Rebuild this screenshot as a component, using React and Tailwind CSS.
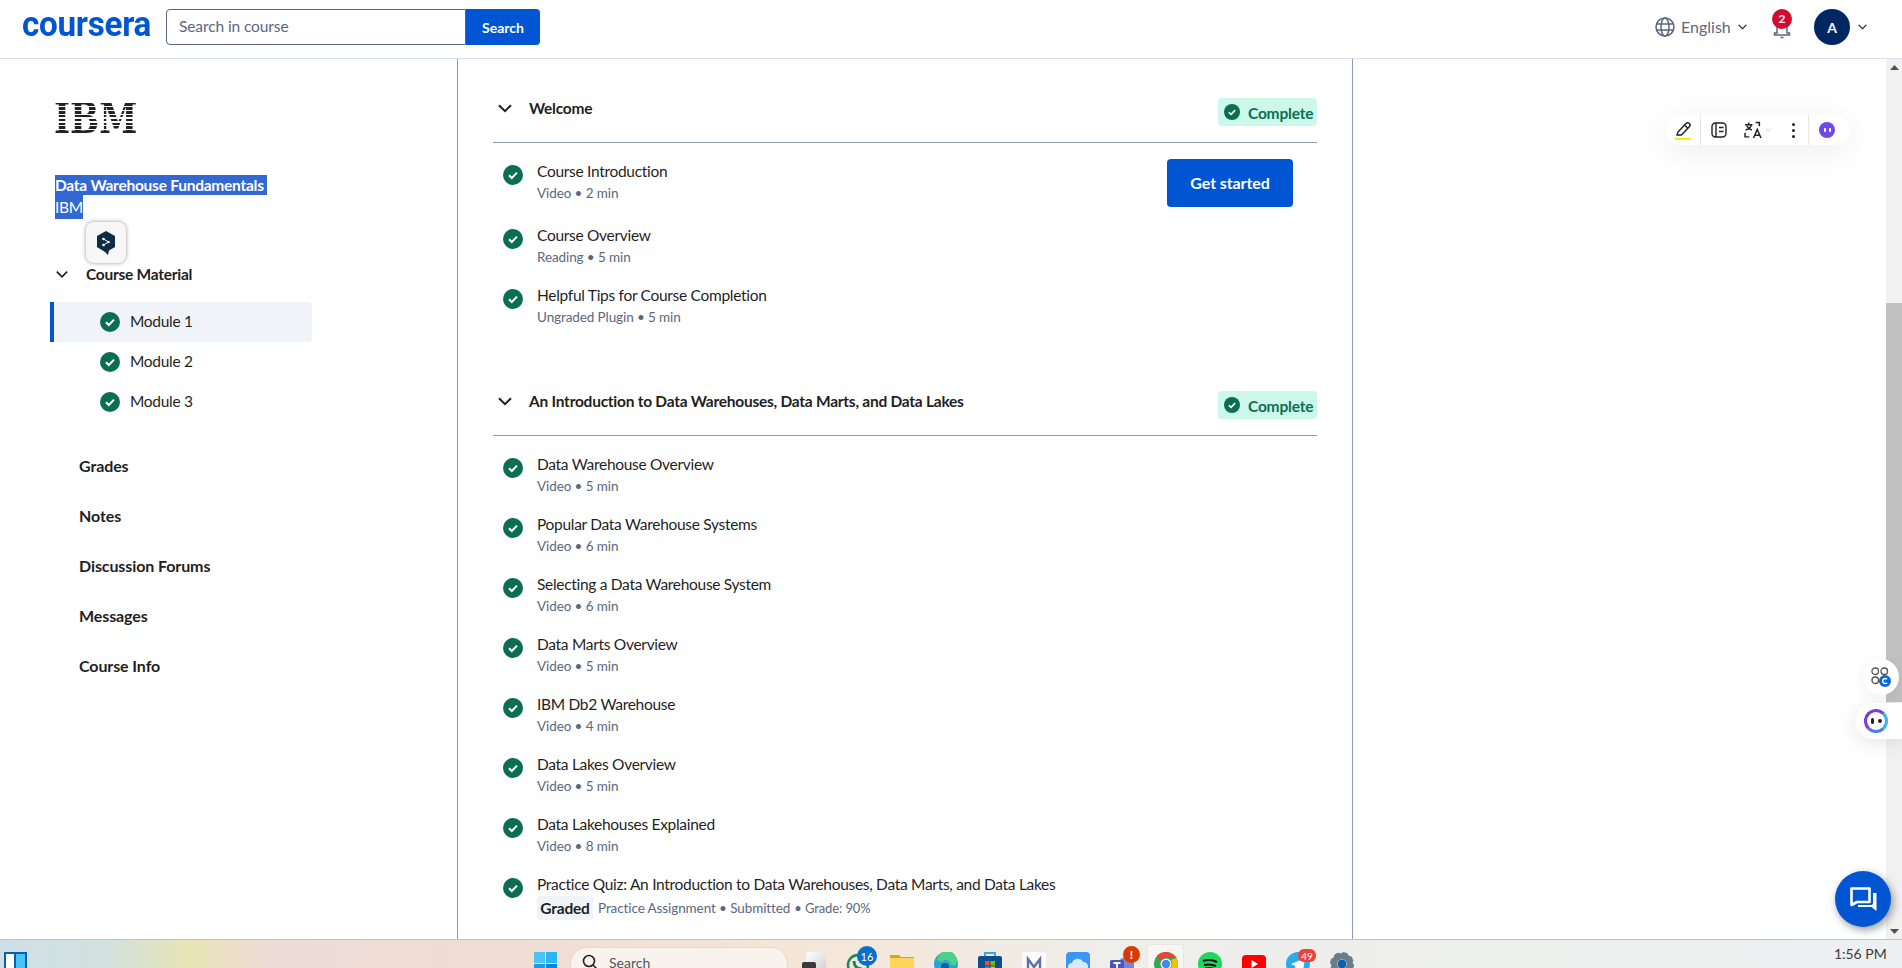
import React from "react";

const Check = ({ size = 20 }) => (
  <svg width={size} height={size} viewBox="0 0 20 20" className="shrink-0">
    <circle cx="10" cy="10" r="10" fill="#0b6e52" />
    <path d="M6 10.3l2.8 2.7L14 7.6" fill="none" stroke="#fff" strokeWidth="2" />
  </svg>
);

const Chevron = ({ className = "", color = "#1f1f1f", w = 2 }) => (
  <svg viewBox="0 0 14 9" className={className}>
    <path d="M1 1.2l6 6 6-6" fill="none" stroke={color} strokeWidth={w} />
  </svg>
);

const Badge = () => (
  <div className="flex h-[28px] w-[99px] shrink-0 items-center gap-[8px] rounded-[4px] bg-[#ccf8e9] pl-[6px] text-[15.5px] font-bold leading-[28px] tracking-[-0.2px] text-[#0b6e52]">
    <Check size={16} />
    <span className="pt-[1px]">Complete</span>
  </div>
);

const Item = ({ title, meta, children, className = "h-[60px]" }) => (
  <div className={"flex gap-[14px] pl-[10px] " + className}>
    <div className="pt-[4px]">
      <Check size={20} />
    </div>
    <div className="flex flex-col">
      <div className="text-[15.5px] leading-[20px] tracking-[-0.3px] text-[#1f1f1f]">{title}</div>
      {children || (
        <div className="mt-[3px] text-[13.5px] leading-[18px] tracking-[-0.1px] text-[#5b6780]">{meta}</div>
      )}
    </div>
  </div>
);

const Section = ({ title, items, extra, className = "" }) => (
  <section className={className}>
    <div className="flex items-start justify-between border-b border-[#8c9ab5] pb-[16px]">
      <div className="flex items-center gap-[17px] pl-[5px] text-[15.5px] font-bold leading-[20px] tracking-[-0.25px] text-[#1f1f1f]">
        <Chevron className="h-[9px] w-[14px]" />
        <span>{title}</span>
      </div>
      <Badge />
    </div>
    <div className="pt-[18px]">{items}</div>
    {extra}
  </section>
);

const Nav = ({ children }) => (
  <div className="flex h-[50px] items-center pl-[79px] text-[16px] font-bold tracking-[-0.1px] text-[#1f1f1f]">{children}</div>
);

const Module = ({ n, active }) => (
  <div
    className={
      active
        ? "flex h-[40px] w-[262px] items-center gap-[10px] rounded-r-[4px] border-l-[4px] border-[#0056d2] bg-[#f0f4f9] pl-[46px] text-[15.5px] tracking-[-0.3px] text-[#1f1f1f]"
        : "flex h-[40px] w-[262px] items-center gap-[10px] pl-[50px] text-[15.5px] tracking-[-0.3px] text-[#1f1f1f]"
    }
  >
    <Check />
    <span>Module {n}</span>
  </div>
);

const TaskIcon = ({ children, className = "" }) => (
  <div className={"relative h-[24px] w-[24px] shrink-0 " + className}>{children}</div>
);

const Arrow = ({ up }) => (
  <div className="flex h-[16px] items-center justify-center">
    <svg width="9" height="5" viewBox="0 0 9 5">
      <path d={up ? "M4.5 0L9 5H0z" : "M4.5 5L9 0H0z"} fill="#505050" />
    </svg>
  </div>
);

export default function App() {
  return (
    <div className="relative flex h-[968px] w-[1902px] flex-col overflow-hidden bg-white font-['Lato','Noto_Sans',sans-serif]">
      {/* Header */}
      <header className="flex h-[59px] shrink-0 items-start border-b border-[#dae1ed] bg-white">
        <div className="ml-[22px] mt-[5px] h-[40px] w-[144px] shrink-0">
          <span className="inline-block origin-left scale-x-[0.95] font-['Roboto',sans-serif] text-[35px] font-bold leading-[40px] tracking-[-0.3px] text-[#0056d2]">
            coursera
          </span>
        </div>
        <div className="mt-[9px] flex h-[36px] w-[374px] shrink-0">
          <div className="flex h-full w-[300px] items-center rounded-l-[4px] border border-[#5b6780] pl-[12px] text-[15.5px] tracking-[-0.1px] text-[#5b6780]">
            Search in course
          </div>
          <div className="flex h-full w-[74px] items-center justify-center rounded-r-[4px] bg-[#0056d2] text-[14px] font-bold text-white">
            Search
          </div>
        </div>
        <div className="flex-1" />
        <div className="mt-[17px] flex h-[20px] w-[101px] items-center">
          <svg width="20" height="20" viewBox="0 0 20 20" fill="none" stroke="#5b6780" strokeWidth="1.5" className="ml-[1px] shrink-0">
            <circle cx="10" cy="10" r="9" />
            <ellipse cx="10" cy="10" rx="4" ry="9" />
            <path d="M1.500 7h17M1.500 13h17" />
          </svg>
          <span className="ml-[6px] w-[56px] text-[16px] text-[#5b6780]">English</span>
          <Chevron className="ml-[1px] h-[6px] w-[9px] shrink-0" color="#1f1f1f" w={1.8} />
        </div>
        <div className="relative ml-[16px] mt-[9px] h-[30px] w-[22px]">
          <svg width="22" height="30" viewBox="0 0 22 30" fill="none" stroke="#5b6780" strokeWidth="1.5">
            <path d="M6 15v9H3.500v2h15v-2H16v-9M9.500 28.500h3" />
          </svg>
          <div className="absolute left-[1px] top-0 flex h-[20px] w-[20px] items-center justify-center rounded-full bg-[#d30a2e] text-[12px] font-bold leading-none text-white">
            2
          </div>
        </div>
        <div className="ml-[21px] mt-[9px] flex h-[36px] w-[36px] items-center justify-center rounded-full bg-[#002761] text-[14px] font-bold text-white">
          A
        </div>
        <Chevron className="ml-[8px] mr-[35px] mt-[24px] h-[6px] w-[9px]" w={1.8} />
      </header>

      {/* Main */}
      <div className="flex min-h-0 flex-1">
        <aside className="w-[458px] shrink-0 border-r border-[#8c9ab5]">
          <div className="ml-[54px] mt-[44px] h-[31px] w-[100px] origin-left scale-x-[0.82] bg-[repeating-linear-gradient(180deg,#222_0px,#222_2.7px,transparent_2.7px,transparent_3.9px)] bg-clip-text font-['DejaVu_Serif',serif] text-[42px] font-bold leading-[31px] text-transparent">
            IBM
          </div>
          <div className="ml-[55px] mt-[41px] flex flex-col items-start">
            <div className="h-[20px] bg-[#3367d1] pr-[3px] text-[15.5px] font-bold leading-[20px] tracking-[-0.25px] text-white">
              Data Warehouse Fundamentals
            </div>
            <div className="h-[24px] bg-[#3367d1] text-[15.5px] leading-[24px] tracking-[-0.3px] text-white">IBM</div>
          </div>
          <div className="ml-[56px] mt-[45px] flex h-[20px] items-center gap-[18px] text-[15.5px] font-bold leading-[20px] tracking-[-0.25px] text-[#1f1f1f]">
            <Chevron className="h-[9px] w-[12px]" />
            <span>Course Material</span>
          </div>
          <div className="ml-[50px] mt-[18px] flex flex-col">
            <Module n={1} active />
            <Module n={2} />
            <Module n={3} />
          </div>
          <div className="mt-[19px] flex flex-col">
            <Nav>Grades</Nav>
            <Nav>Notes</Nav>
            <Nav>Discussion Forums</Nav>
            <Nav>Messages</Nav>
            <Nav>Course Info</Nav>
          </div>
        </aside>

        <main className="w-[895px] shrink-0 border-r border-[#8c9ab5] pl-[35px] pr-[35px] pt-[39px]">
          <div className="relative">
            <Section
              title="Welcome"
              items={
                <>
                  <Item className="h-[64px]" title="Course Introduction" meta="Video • 2 min" />
                  <Item title="Course Overview" meta="Reading • 5 min" />
                  <Item title="Helpful Tips for Course Completion" meta="Ungraded Plugin • 5 min" />
                </>
              }
            />
            <div className="absolute left-[674px] top-[61px] flex h-[48px] w-[126px] items-center justify-center rounded-[4px] bg-[#0056d2] text-[16px] font-bold tracking-[-0.1px] text-white">
              Get started
            </div>
          </div>
          <Section
            className="mt-[46px]"
            title="An Introduction to Data Warehouses, Data Marts, and Data Lakes"
            items={
              <>
                <Item title="Data Warehouse Overview" meta="Video • 5 min" />
                <Item title="Popular Data Warehouse Systems" meta="Video • 6 min" />
                <Item title="Selecting a Data Warehouse System" meta="Video • 6 min" />
                <Item title="Data Marts Overview" meta="Video • 5 min" />
                <Item title="IBM Db2 Warehouse" meta="Video • 4 min" />
                <Item title="Data Lakes Overview" meta="Video • 5 min" />
                <Item title="Data Lakehouses Explained" meta="Video • 8 min" />
                <Item title="Practice Quiz: An Introduction to Data Warehouses, Data Marts, and Data Lakes">
                  <div className="mt-[2px] flex items-center text-[13.5px] leading-[24px] tracking-[-0.1px] text-[#5b6780]">
                    <span className="mr-[5px] flex w-[56px] justify-center rounded-[3px] bg-[#f0f4f9] text-[15.5px] font-bold tracking-[-0.2px] text-[#1f1f1f]">
                      Graded
                    </span>
                    <span>Practice Assignment • Submitted</span>
                    <span className="ml-[4px] text-[13px]">• Grade: 90%</span>
                  </div>
                </Item>
              </>
            }
          />
        </main>

        <div className="flex-1" />

        <div className="flex w-[16px] shrink-0 flex-col bg-[#f1f1f1]">
          <Arrow up />
          <div className="mt-[228px] h-[399px] bg-[#c1c1c1]" />
          <div className="flex-1" />
          <Arrow />
        </div>
      </div>

      {/* Taskbar */}
      <footer className="relative flex h-[29px] shrink-0 items-start overflow-hidden border-t border-[#c5c1bb] bg-[linear-gradient(90deg,#cfdfe8_0px,#d2e1dc_110px,#e8e4b6_190px,#eddcd6_270px,#efdcd4_500px,#f5e5d5_750px,#f3e8dc_900px,#eeeeea_1100px,#ecf0f0_1902px)] pt-[12px]">
        <div className="ml-[4px] flex h-[24px] w-[23px] shrink-0 gap-[2px] border-2 border-[#0a5fae] bg-[#0a5fae]">
          <div className="w-[8px] bg-white" />
          <div className="w-[9px] bg-[#49c2f5]" />
        </div>
        <svg width="23" height="23" viewBox="0 0 23 23" className="ml-[507px] shrink-0">
          <rect width="11" height="11" fill="#4fc3f7" />
          <rect x="12" width="11" height="11" fill="#29b6f6" />
          <rect y="12" width="11" height="11" fill="#1e9be8" />
          <rect x="12" y="12" width="11" height="11" fill="#0b84dd" />
        </svg>
        <div className="ml-[13px] -mt-[5px] flex h-[34px] w-[218px] shrink-0 items-start rounded-full border border-[#e6d8cc] bg-[#f9f3ee] pl-[11px] pt-[6px]">
          <svg width="16" height="16" viewBox="0 0 16 16" fill="none" stroke="#222" strokeWidth="1.6">
            <circle cx="7" cy="7" r="5.500" />
            <path d="M11 11l3.500 3.500" />
          </svg>
          <span className="ml-[11px] text-[14px] leading-[17px] text-[#555]">Search</span>
        </div>
        <div className="ml-[14px] flex gap-[20px]">
          <TaskIcon>
            <div className="absolute right-0 top-0 h-[20px] w-[20px] rounded-[2px] bg-[linear-gradient(135deg,#ffffff,#cfcfcf)]" />
            <div className="absolute bottom-0 left-0 h-[14px] w-[14px] rounded-[2px] bg-[#3a3a3a]" />
          </TaskIcon>
          <TaskIcon>
            <svg width="24" height="24" viewBox="0 0 24 24" fill="none">
              <circle cx="12" cy="13" r="10" stroke="#1a8a5a" strokeWidth="2.5" />
              <path d="M8 9c0 5 3 8 8 8" stroke="#1a8a5a" strokeWidth="3" />
            </svg>
            <div className="absolute -right-[7px] -top-[6px] flex h-[20px] w-[20px] items-center justify-center rounded-full bg-[#0a6fc9] text-[11px] leading-none text-white">
              16
            </div>
          </TaskIcon>
          <TaskIcon>
            <svg width="24" height="24" viewBox="0 0 24 24">
              <path d="M0 3h9l2 2h13v19H0z" fill="#d9a41e" />
              <rect y="6" width="24" height="18" fill="#fbd65a" />
            </svg>
          </TaskIcon>
          <TaskIcon>
            <svg width="24" height="24" viewBox="0 0 24 24">
              <circle cx="12" cy="12" r="12" fill="#2aa5cf" />
              <path d="M3 8a10 10 0 0 1 20 2c0 3-3 4-6 3 0-4-6-7-9-3z" fill="#4fd08a" />
              <circle cx="11" cy="15" r="4" fill="#0a5fae" />
            </svg>
          </TaskIcon>
          <TaskIcon>
            <svg width="24" height="24" viewBox="0 0 24 24" fill="none">
              <path d="M7 5V1h10v4" stroke="#35a7e8" strokeWidth="2" />
              <rect y="4" width="24" height="20" rx="2" fill="#0b4f8f" />
              <rect x="7" y="9" width="4.500" height="4.500" fill="#f25022" />
              <rect x="12.500" y="9" width="4.500" height="4.500" fill="#7fba00" />
              <rect x="7" y="14.500" width="4.500" height="4.500" fill="#00a4ef" />
              <rect x="12.500" y="14.500" width="4.500" height="4.500" fill="#ffb900" />
            </svg>
          </TaskIcon>
          <TaskIcon>
            <svg width="24" height="24" viewBox="0 0 24 24" fill="none">
              <rect width="24" height="24" rx="3" fill="#fbfbfb" />
              <path d="M6 20V7l6 8 6-8v13" stroke="#5c70a8" strokeWidth="2.400" />
            </svg>
          </TaskIcon>
          <TaskIcon>
            <svg width="24" height="24" viewBox="0 0 24 24">
              <rect width="24" height="24" rx="4" fill="#3d96f5" />
              <path d="M6 19a4 4 0 0 1 0-8 6 6 0 0 1 11-1 4.500 4.500 0 0 1 1 9z" fill="#d8e9fb" />
            </svg>
          </TaskIcon>
          <TaskIcon>
            <svg width="24" height="24" viewBox="0 0 24 24">
              <rect x="10" y="6" width="14" height="18" rx="3" fill="#7b83d8" />
              <rect y="8" width="14" height="14" rx="1.500" fill="#4b53bc" />
              <path d="M3.500 11h7M7 11v8" stroke="#fff" strokeWidth="1.800" />
            </svg>
            <div className="absolute -right-[6px] -top-[6px] flex h-[17px] w-[17px] items-center justify-center rounded-full bg-[#d83b01] text-[12px] font-bold leading-none text-white">
              !
            </div>
          </TaskIcon>
          <TaskIcon>
            <div className="absolute -left-[7px] -top-[8px] h-[40px] w-[37px] rounded-[4px] border border-[#e6e6e2] bg-[#f6f6f3]" />
            <svg width="24" height="24" viewBox="0 0 24 24" className="absolute left-0 top-0">
              <circle cx="12" cy="12" r="12" fill="#34a853" />
              <path d="M12 0a12 12 0 0 1 10.400 6H12a6 6 0 0 0-5.200 3L3 3.500A12 12 0 0 1 12 0z" fill="#ea4335" />
              <path d="M22.400 6A12 12 0 0 1 12 24l5.200-9A6 6 0 0 0 17 8z" fill="#fbbc05" />
              <circle cx="12" cy="12" r="5.500" fill="#fff" />
              <circle cx="12" cy="12" r="4.200" fill="#4285f4" />
            </svg>
          </TaskIcon>
          <TaskIcon>
            <svg width="24" height="24" viewBox="0 0 24 24" fill="none">
              <circle cx="12" cy="12" r="12" fill="#1ed760" />
              <path d="M5 9c5-1.500 10-1 14 1M6 13c4-1 8-.8 12 1M7 16.500c3-.8 7-.6 9.500 1" stroke="#111" strokeWidth="2" />
            </svg>
          </TaskIcon>
          <TaskIcon>
            <svg width="24" height="24" viewBox="0 0 24 24">
              <rect y="3" width="24" height="18" rx="4" fill="#f00" />
              <path d="M9.500 8l6.500 4-6.500 4z" fill="#fff" />
            </svg>
          </TaskIcon>
          <TaskIcon>
            <svg width="24" height="24" viewBox="0 0 24 24">
              <circle cx="12" cy="12" r="12" fill="#2aabee" />
              <path d="M5 12l14-6-2 13-5-3-2 3-1-5z" fill="#fff" />
            </svg>
            <div className="absolute -right-[6px] -top-[3px] flex h-[13px] w-[18px] items-center justify-center rounded-[6px] bg-[#e8433f] text-[10px] leading-none text-white">
              49
            </div>
          </TaskIcon>
          <TaskIcon>
            <svg width="24" height="24" viewBox="0 0 24 24" fill="none">
              <circle cx="12" cy="12" r="8" stroke="#6e7b8a" strokeWidth="6" />
              <circle cx="12" cy="12" r="8.500" stroke="#6e7b8a" strokeWidth="7" strokeDasharray="4 2.700" />
              <circle cx="12" cy="12" r="4.500" fill="#0a5fae" />
            </svg>
          </TaskIcon>
        </div>
        <div className="flex-1" />
        <div className="-mt-[8px] mr-[11px] text-center text-[14px] leading-[20px] text-[#3c3c3c]">
          <div>1:56 PM</div>
          <div>2/3/2025</div>
        </div>
      </footer>

      {/* Floating overlays */}
      <div className="absolute left-[86px] top-[222px] flex h-[41px] w-[40px] items-center justify-center rounded-[8px] bg-[#f7f7f7] shadow-[0_0_4px_rgba(0,0,0,0.4)]">
        <svg width="20" height="26" viewBox="0 0 20 26">
          <path d="M10 1l9 5v11l-6 3.500-1 4.500-3-3-8-5V6z" fill="#0f2b46" />
          <path d="M7.500 9l5 3-5 3" fill="none" stroke="#fff" strokeWidth="1" />
          <circle cx="7.500" cy="9" r="1.300" fill="#fff" />
          <circle cx="7.500" cy="15" r="1.300" fill="#fff" />
          <circle cx="12.500" cy="12" r="1.300" fill="#fff" />
        </svg>
      </div>

      <div className="absolute left-[1666px] top-[115px] flex h-[30px] w-[184px] items-center rounded-full bg-white shadow-[0_6px_32px_rgba(0,0,0,0.08)]">
        <div className="flex h-[30px] w-[35px] items-center justify-center border-r border-[#e5e5e5]">
          <svg width="18" height="20" viewBox="0 0 18 20" fill="none" stroke="#222" strokeWidth="1.400">
            <path d="M4 12L12 3.500a1.800 1.800 0 0 1 3.500 3L7.500 15H3z" />
            <path d="M10.500 5l3.500 3.500" />
            <path d="M1 18.800h16" stroke="#f3ea00" strokeWidth="2" />
          </svg>
        </div>
        <svg width="16" height="16" viewBox="0 0 16 16" fill="none" stroke="#222" strokeWidth="1.400" className="ml-[10px]">
          <rect x="1" y="1" width="14" height="14" rx="3.500" />
          <path d="M5 1v14M8 5.500h4.500M8 9.500h4.500" />
        </svg>
        <svg width="18" height="18" viewBox="0 0 17 17" fill="none" stroke="#222" strokeWidth="1.400" className="ml-[17px]">
          <path d="M1 3.500h7M4.500 1.500v2M7 3.500C6.500 6 4 8 1.500 8.500M2.500 4.500C3.500 6.500 5.500 8 7.500 8.500" />
          <path d="M9 16l3.500-8 3.500 8M10.200 13.500h4.600" />
          <path d="M11 1.500h3.500V5M1 11v4h4" />
        </svg>
        <Chevron className="ml-[3px] h-[4px] w-[7px]" color="#bbb" w={1.5} />
        <div className="ml-[20px] flex flex-col gap-[3px]">
          <div className="h-[3px] w-[3px] rounded-full bg-[#222]" />
          <div className="h-[3px] w-[3px] rounded-full bg-[#222]" />
          <div className="h-[3px] w-[3px] rounded-full bg-[#222]" />
        </div>
        <div className="ml-[13px] flex h-[30px] w-[37px] items-center justify-center border-l border-[#e5e5e5]">
          <div className="flex h-[16px] w-[16px] items-center justify-center gap-[3px] rounded-full bg-[#6e48e8]">
            <div className="h-[4px] w-[2px] rounded-full bg-white" />
            <div className="h-[4px] w-[2px] rounded-full bg-white" />
          </div>
        </div>
      </div>

      <div className="absolute left-[1863px] top-[659px] flex h-[36px] w-[36px] items-center justify-center rounded-full bg-white shadow-[0_2px_16px_rgba(0,0,0,0.06)]">
        <svg width="20" height="20" viewBox="0 0 20 20" fill="none" stroke="#555" strokeWidth="1.300">
          <rect x="1" y="1" width="6.500" height="6.500" rx="3" />
          <rect x="10" y="1" width="6.500" height="6.500" rx="3" />
          <rect x="1" y="10" width="6.500" height="6.500" rx="3" />
          <circle cx="14" cy="14" r="6" fill="#0a66e0" stroke="none" />
          <path d="M16 12.300a2.500 2.500 0 1 0 0 3.400" stroke="#fff" strokeWidth="1.500" />
        </svg>
      </div>

      <div className="absolute left-[1855px] top-[703px] flex h-[36px] w-[47px] items-center rounded-l-full bg-white pl-[9px] shadow-[0_4px_20px_rgba(0,0,0,0.1)]">
        <div className="flex h-[24px] w-[24px] items-center justify-center gap-[4px] rounded-full border-[3px] border-[#7b3fd6] border-r-[#35b8e8] border-b-[#4a7de8]">
          <div className="h-[6px] w-[3px] rounded-full bg-[#222]" />
          <div className="h-[4px] w-[4px] rounded-full bg-[#222]" />
        </div>
      </div>

      <div className="absolute left-[1835px] top-[871px] flex h-[56px] w-[56px] items-center justify-center rounded-full bg-[#0056d2] shadow-[2px_3px_8px_rgba(0,0,0,0.4)]">
        <svg width="28" height="26" viewBox="0 0 28 26">
          <path d="M24 7h3.500v18l-5-4H9v-2h13a2 2 0 0 0 2-2z" fill="#fff" />
          <path d="M2.500 2.500h18v13.500H8l-5.500 3z" fill="none" stroke="#fff" strokeWidth="2.600" strokeLinejoin="round" />
        </svg>
      </div>
    </div>
  );
}
